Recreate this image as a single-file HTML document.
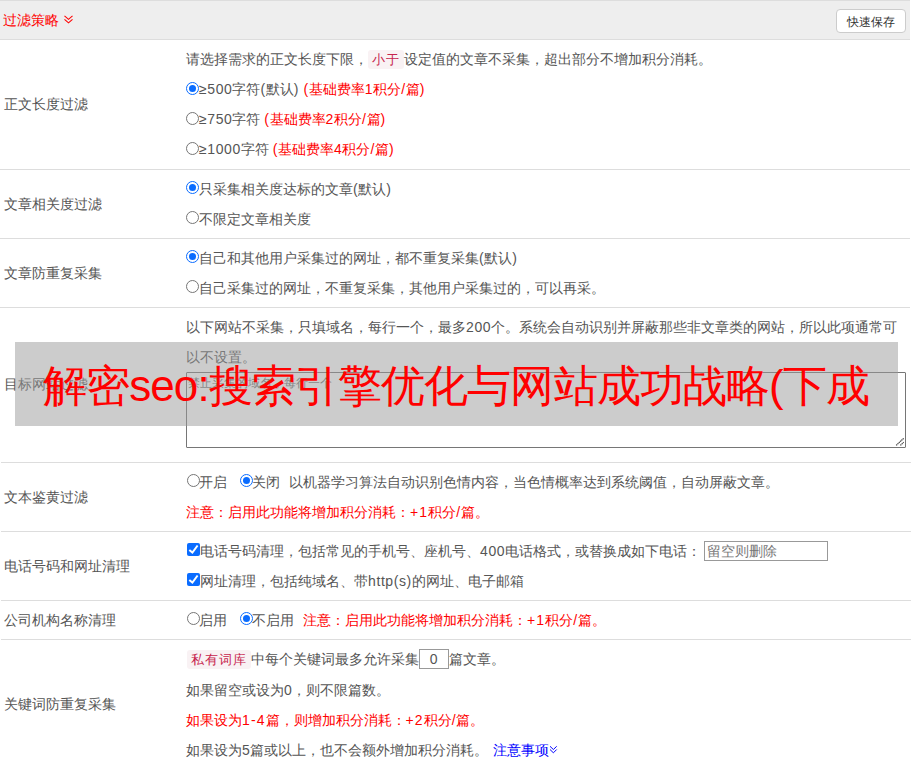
<!DOCTYPE html>
<html><head><meta charset="utf-8">
<style>
html,body{margin:0;padding:0;background:#fff;width:912px;height:768px;overflow:hidden;}
body{font-family:"Liberation Sans",sans-serif;font-size:14px;color:#555;position:relative;}
.a{position:absolute;white-space:nowrap;}
i{font-style:normal;letter-spacing:.6px;}
i.w{letter-spacing:1.1px;}
.hdr{position:absolute;left:0;top:0;width:910px;height:39px;background:#eeeeee;border-top:1px solid #dddddd;box-sizing:border-box;}
.hl{position:absolute;height:1px;background:#dddddd;}
.ln{position:absolute;left:186px;height:30px;line-height:30px;white-space:nowrap;}
.lab{position:absolute;left:4px;height:30px;line-height:30px;white-space:nowrap;}
.red{color:#ff0000;}
.r{display:inline-block;width:13px;height:13px;box-sizing:border-box;border-radius:50%;border:1px solid #767676;vertical-align:top;margin-top:8px;position:relative;background:#fff;}
.r.on{border-color:#0a6cff;}
.r.on:after{content:"";position:absolute;left:2px;top:2px;width:7px;height:7px;border-radius:50%;background:#0a6cff;}
.cb{display:inline-block;width:13px;height:13px;border-radius:2px;background:#0a6cff;vertical-align:top;margin-top:7px;margin-left:1px;position:relative;}
.cb svg{position:absolute;left:0;top:0;}
.tag{display:inline-block;background:#f9f2f4;color:#c7254e;padding:0 4px 0 4px;height:19px;line-height:19px;border-radius:3px;font-size:13px;letter-spacing:1px;vertical-align:top;margin-top:6px;}
.g12{margin-left:12px;}
.u{top:-1px;}
.ur{top:-1px;left:1px;}
.g8{margin-left:9px;}
</style></head><body>
<div class="hdr"></div>
<div class="hl" style="left:0;top:39px;width:910px"></div>
<div class="a red" style="left:3px;top:5px;line-height:30px">过滤策略</div>
<svg class="a" style="left:63px;top:14px" width="11" height="11" viewBox="0 0 11 11"><path d="M1.5 1.8 L5.5 5.3 L9.5 1.8 M1.5 5.3 L5.5 8.8 L9.5 5.3" fill="none" stroke="#ff0000" stroke-width="1.1"/></svg>
<div class="a" style="left:836px;top:9px;width:70px;height:24px;box-sizing:border-box;border:1px solid #cccccc;border-radius:4px;background:#fff;color:#333;font-size:12px;line-height:24px;text-align:center">快速保存</div>

<!-- row 1 -->
<div class="lab" style="top:89px">正文长度过滤</div>
<div class="ln" style="top:44px">请选择需求的正文长度下限，<span class="tag">小于</span>设定值的文章不采集，超出部分不增加积分消耗。</div>
<div class="ln" style="top:74px"><span class="r on"></span><i>≥500</i>字符<i>(</i>默认<i>) </i><span class="red"><i>(</i>基础费率<i>1</i>积分<i>/</i>篇<i>)</i></span></div>
<div class="ln" style="top:104px"><span class="r"></span><i>≥750</i>字符 <span class="red"><i>(</i>基础费率<i>2</i>积分<i>/</i>篇<i>)</i></span></div>
<div class="ln" style="top:134px"><span class="r"></span><i>≥1000</i>字符 <span class="red"><i>(</i>基础费率<i>4</i>积分<i>/</i>篇<i>)</i></span></div>
<div class="hl" style="left:0;top:169px;width:910px"></div>

<!-- row 2 -->
<div class="lab" style="top:189px">文章相关度过滤</div>
<div class="ln" style="top:174px"><span class="r on u"></span>只采集相关度达标的文章<i>(</i>默认<i>)</i></div>
<div class="ln" style="top:204px"><span class="r u"></span>不限定文章相关度</div>
<div class="hl" style="left:0;top:238px;width:910px"></div>

<!-- row 3 -->
<div class="lab" style="top:258px">文章防重复采集</div>
<div class="ln" style="top:243px"><span class="r on u"></span>自己和其他用户采集过的网址，都不重复采集<i>(</i>默认<i>)</i></div>
<div class="ln" style="top:273px"><span class="r u"></span>自己采集过的网址，不重复采集，其他用户采集过的，可以再采。</div>
<div class="hl" style="left:0;top:307px;width:910px"></div>

<!-- row 4 -->
<div class="lab" style="top:369px">目标网站过滤</div>
<div class="ln" style="top:312px">以下网站不采集，只填域名，每行一个，最多<i>200</i>个。系统会自动识别并屏蔽那些非文章类的网站，所以此项通常可</div>
<div class="ln" style="top:342px">以不设置。</div>
<div class="a" style="left:186px;top:372px;width:720px;height:76px;box-sizing:border-box;border:1px solid #767676;border-radius:1px;background:#fff"></div>
<div class="a" style="left:188px;top:373px;font-size:12px;line-height:20px;color:#757575">禁止采集的域名，每行一个</div>
<svg class="a" style="left:894px;top:436px" width="11" height="11" viewBox="0 0 11 11"><path d="M2.2 9.4 L9.7 2.3 M6.4 9.4 L9.7 6.3" fill="none" stroke="#444" stroke-width="1.2" stroke-dasharray="1.3 0.5"/></svg>
<div class="hl" style="left:1px;top:462px;width:910px"></div>

<!-- row 5 -->
<div class="lab" style="top:482px">文本鉴黄过滤</div>
<div class="ln" style="top:467px"><span class="r ur"></span>开启<span class="r on g12 ur"></span>关闭<span class="g8">以机器学习算法自动识别色情内容，当色情概率达到系统阈值，自动屏蔽文章。</span></div>
<div class="ln red" style="top:497px">注意：启用此功能将增加积分消耗：<i class="w">+1</i>积分<i>/</i>篇。</div>
<div class="hl" style="left:1px;top:531px;width:910px"></div>

<!-- row 6 -->
<div class="lab" style="top:551px">电话号码和网址清理</div>
<div class="ln" style="top:536px"><span class="cb"><svg width="13" height="13" viewBox="0 0 13 13"><path d="M2.3 6.9 L5.4 9.5 L10.6 2.5" fill="none" stroke="#fff" stroke-width="2"/></svg></span>电话号码清理，包括常见的手机号、座机号、<i>400</i>电话格式，或替换成如下电话：</div>
<div class="a" style="left:704px;top:541px;width:124px;height:20px;box-sizing:border-box;border:1px solid #999;background:#fff"></div>
<div class="a" style="left:707px;top:541px;line-height:20px;color:#777">留空则删除</div>
<div class="ln" style="top:566px"><span class="cb"><svg width="13" height="13" viewBox="0 0 13 13"><path d="M2.3 6.9 L5.4 9.5 L10.6 2.5" fill="none" stroke="#fff" stroke-width="2"/></svg></span>网址清理，包括纯域名、带<i>http(s)</i>的网址、电子邮箱</div>
<div class="hl" style="left:1px;top:600px;width:910px"></div>

<!-- row 7 -->
<div class="lab" style="top:605px">公司机构名称清理</div>
<div class="ln" style="top:605px"><span class="r ur"></span>启用<span class="r on g12 ur"></span>不启用<span class="red g8">注意：启用此功能将增加积分消耗：<i class="w">+1</i>积分<i>/</i>篇。</span></div>
<div class="hl" style="left:1px;top:639px;width:910px"></div>

<!-- row 8 -->
<div class="lab" style="top:689px">关键词防重复采集</div>
<div class="ln" style="top:644px"><span class="tag" style="margin-left:1px">私有词库</span>中每个关键词最多允许采集<span style="display:inline-block;width:30px;height:20px;box-sizing:border-box;border:1px solid #999;vertical-align:top;margin-top:5px;text-align:center;line-height:18px"><i>0</i></span>篇文章。</div>
<div class="ln" style="top:675px">如果留空或设为<i>0</i>，则不限篇数。</div>
<div class="ln red" style="top:705px">如果设为<i class="w">1-4</i>篇，则增加积分消耗：<i class="w">+2</i>积分<i>/</i>篇。</div>
<div class="ln" style="top:735px">如果设为<i>5</i>篇或以上，也不会额外增加积分消耗。 <span style="color:#0000ff;margin-left:1px">注意事项</span></div>
<svg class="a" style="left:549px;top:745px" width="9" height="9" viewBox="0 0 9 9"><path d="M1 1.3 L4.4 4.5 L7.7 1.3 M1 4.5 L4.4 7.8 L7.7 4.5" fill="none" stroke="#0000ff" stroke-width="1"/></svg>

<!-- overlay -->
<div class="a" style="left:15px;top:342px;width:883px;height:84px;background:rgba(153,153,153,0.5)"></div>
<div class="a" style="left:43px;top:344px;line-height:84px;font-size:44px;letter-spacing:-0.9px;color:#ff0000">解密seo:搜索引擎优化与网站成功战略(下成</div>
</body></html>
